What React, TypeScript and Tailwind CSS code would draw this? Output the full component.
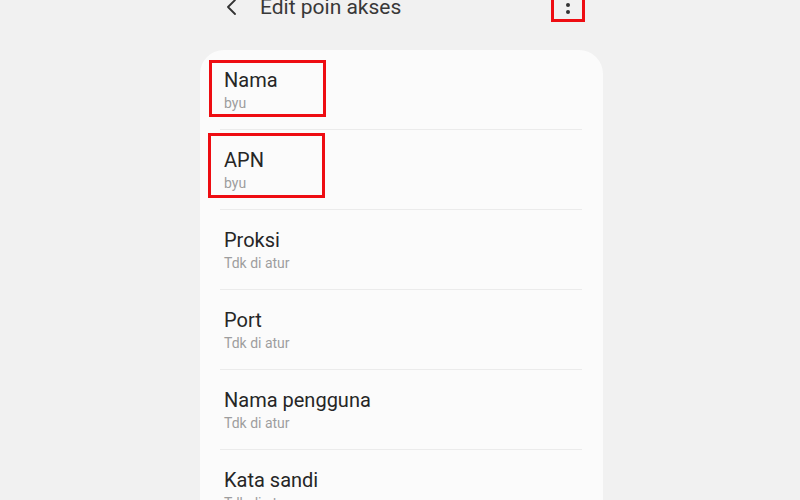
import React from "react";

const items = [
  { title: "Nama", sub: "byu", box: "nama" },
  { title: "APN", sub: "byu", box: "apn" },
  { title: "Proksi", sub: "Tdk di atur" },
  { title: "Port", sub: "Tdk di atur" },
  { title: "Nama pengguna", sub: "Tdk di atur" },
  { title: "Kata sandi", sub: "Tdk di atur" },
];

export default function App() {
  return (
    <div
      className="w-[800px] h-[500px] overflow-hidden bg-[#f1f1f1] flex flex-col"
      style={{ fontFamily: "Roboto, 'Noto Sans', sans-serif" }}
    >
      <div className="h-[50px] shrink-0 relative flex items-start">
        <div className="flex items-center -mt-[5px] h-[24px]">
          <svg className="ml-[225px]" width="14" height="18" viewBox="0 0 14 18" fill="none">
            <path d="M10 2 L3 9 L10 16" stroke="#333" strokeWidth="1.8" strokeLinecap="round" strokeLinejoin="round" />
          </svg>
          <span className="ml-[21px] text-[21px] text-[#383838] leading-[24px]">Edit poin akses</span>
        </div>
        <div className="absolute left-[551px] top-[-4px] w-[34px] h-[26px] border-[3px] border-[#ee0d12] flex flex-col items-center justify-end pb-[5px] gap-[3px]">
          <div className="w-[4px] h-[4px] rounded-full bg-[#333]" />
          <div className="w-[4px] h-[4px] rounded-full bg-[#333]" />
        </div>
      </div>
      <div className="ml-[200px] w-[403px] flex-1 rounded-t-[24px] bg-[#fbfbfb] pl-[20px] pr-[21px] flex flex-col">
        {items.map((it, i) => (
          <div
            key={i}
            className={`relative h-[80px] shrink-0 pl-[4px] pt-[18px] ${i < items.length - 1 ? "border-b border-[#ebebeb]" : ""}`}
          >
            <div className="text-[20px] leading-[24px] text-[#262626]">{it.title}</div>
            <div className="text-[14px] leading-[18px] mt-[2px] text-[#9e9e9e]">{it.sub}</div>
            {it.box === "nama" && (
              <div className="absolute left-[-11px] top-[10px] w-[117px] h-[57px] border-[3px] border-[#ee0d12]" />
            )}
            {it.box === "apn" && (
              <div className="absolute left-[-12px] top-[3px] w-[117px] h-[65px] border-[3px] border-[#ee0d12]" />
            )}
          </div>
        ))}
      </div>
    </div>
  );
}
